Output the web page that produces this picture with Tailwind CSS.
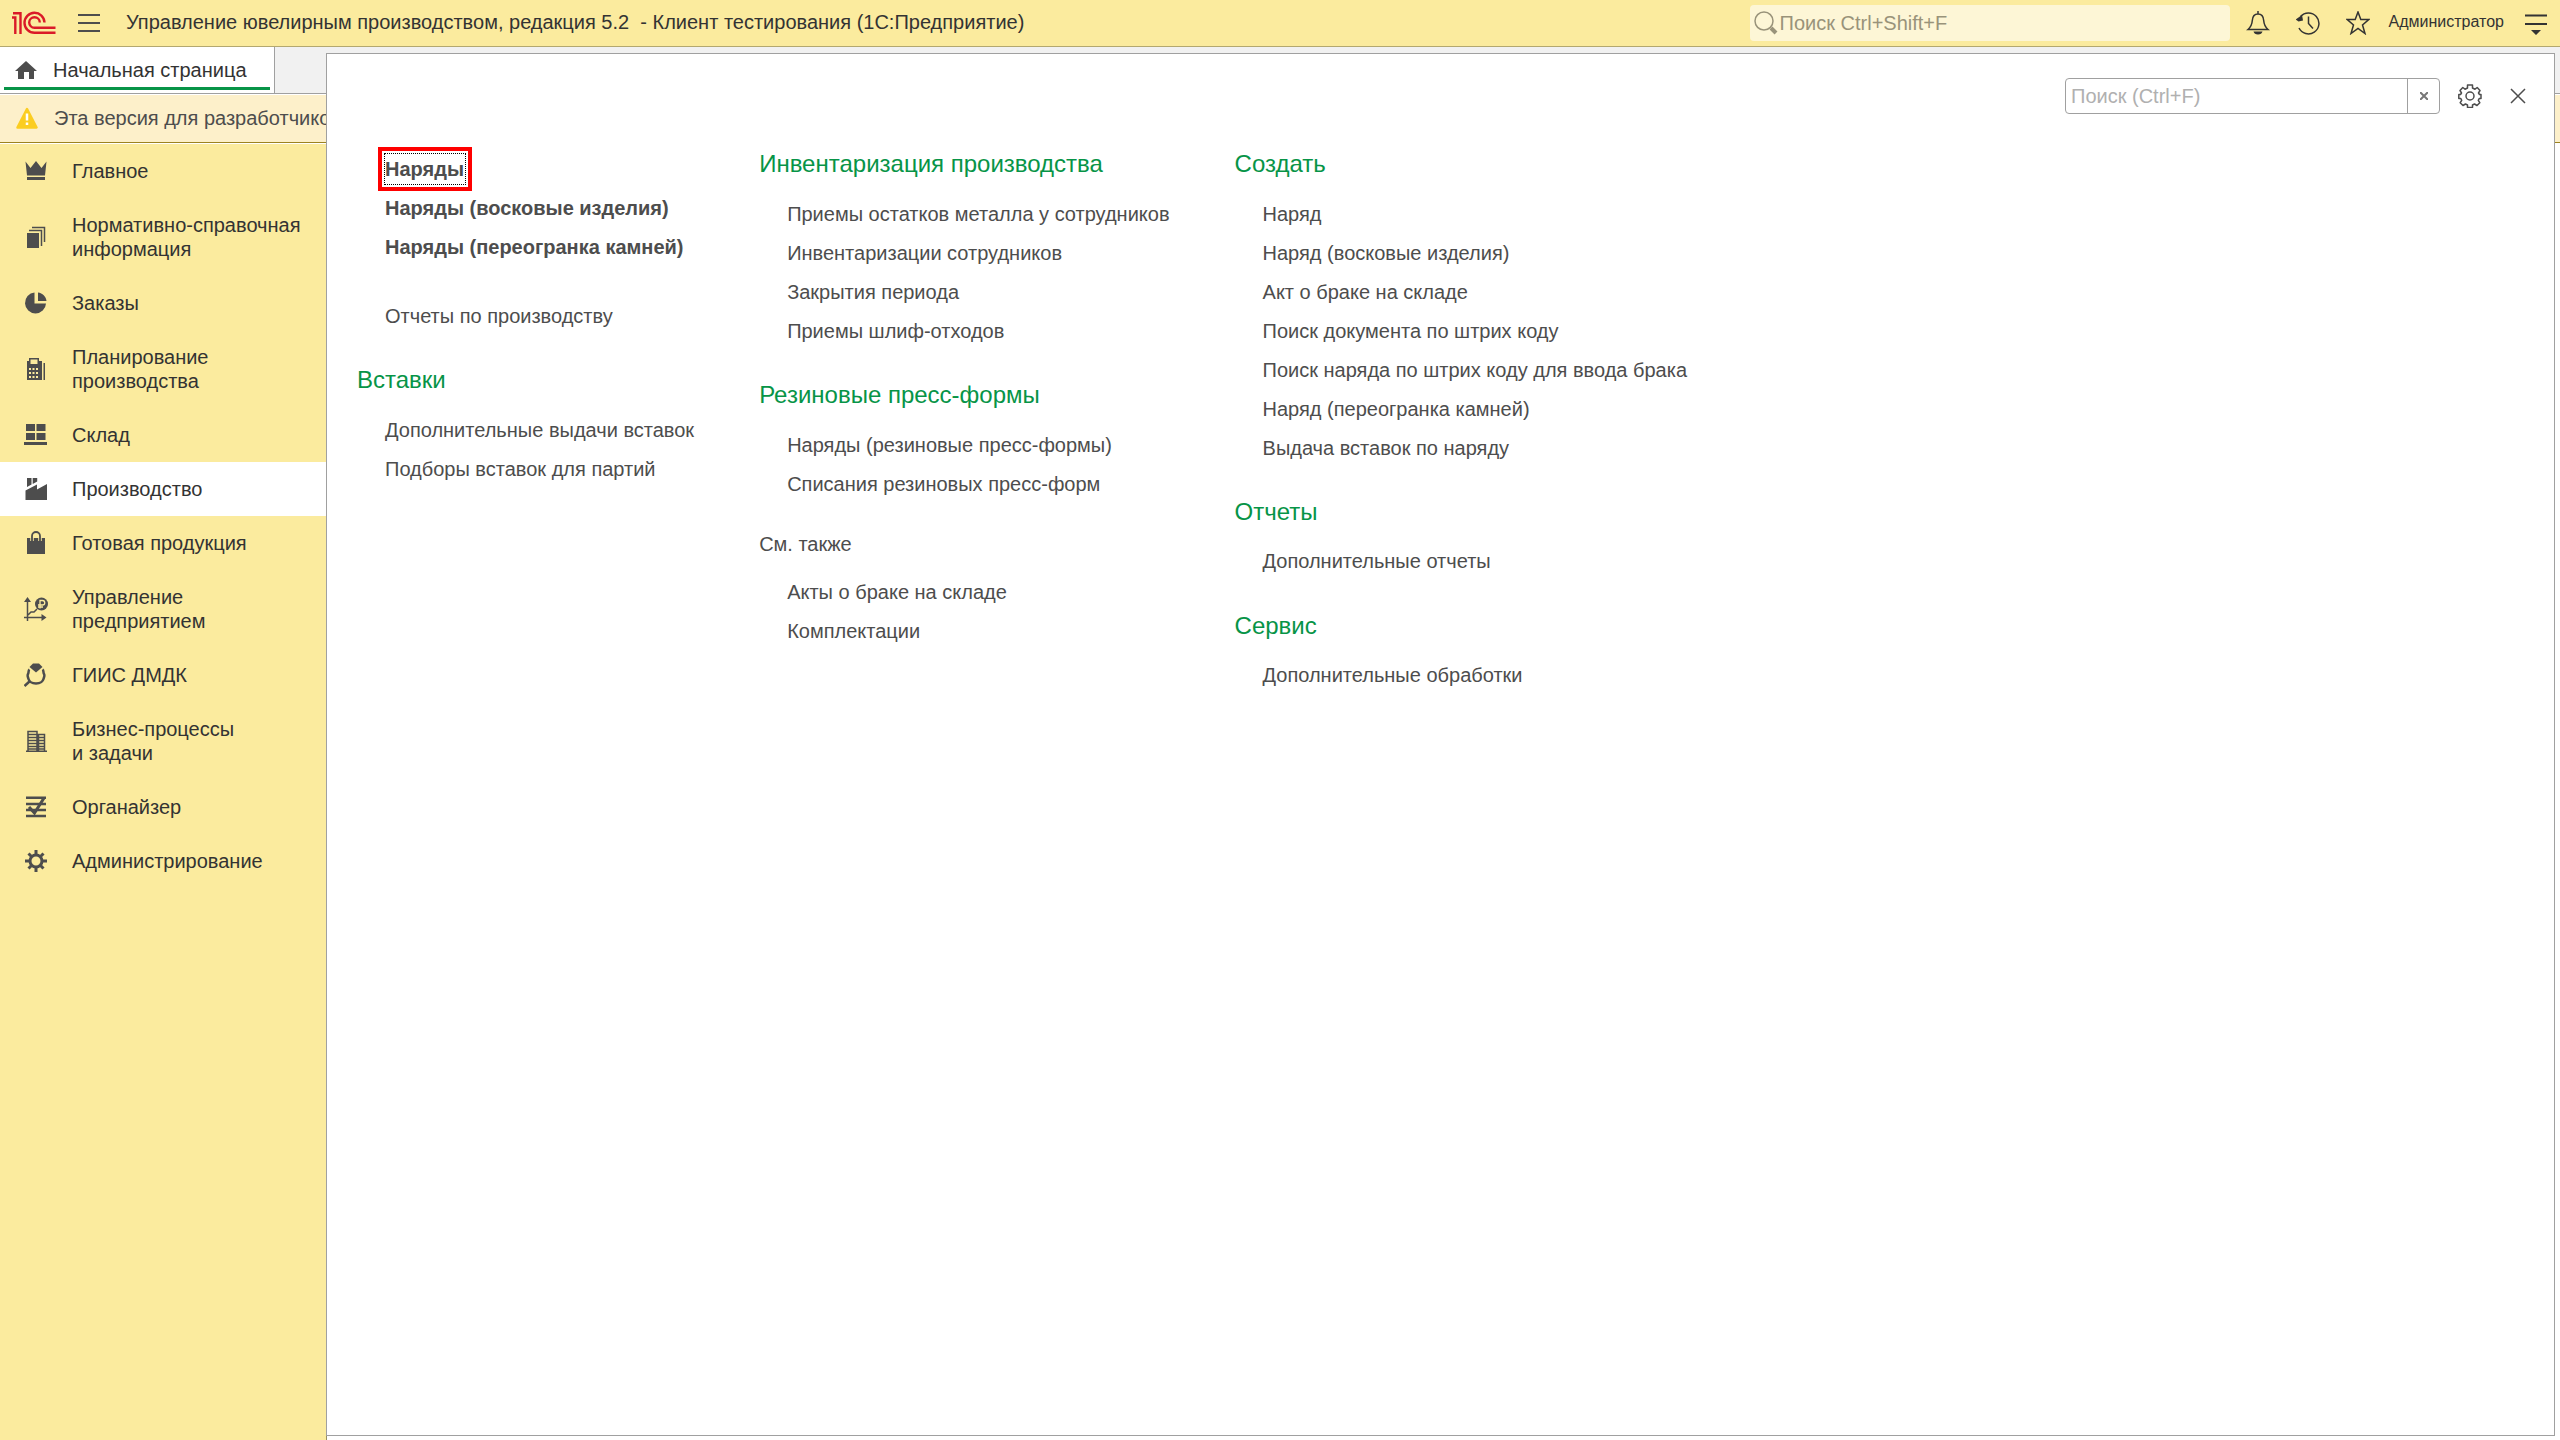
<!DOCTYPE html>
<html lang="ru">
<head>
<meta charset="utf-8">
<title>Управление ювелирным производством</title>
<script src="https://cdn.jsdelivr.net/npm/@tailwindcss/browser@4"></script>
</head>
<body class="relative flex h-screen min-h-[900px] flex-col overflow-hidden bg-white font-['Liberation_Sans',Arial,sans-serif] text-[20px] leading-6 text-[#4d4d4d]">

<header class="flex h-[47px] shrink-0 items-center border-b border-[#b3a870] bg-[#fbeb9e] px-3 text-[#333]">
  <svg class="h-6 w-11" viewBox="0 0 44 24" fill="none" stroke="#da1a28" stroke-width="2.400" aria-label="1С">
    <path d="M0 6.500h3.300V23M1 2.200h7.500V23"/>
    <path d="M32.500 11.500a10 10 0 1 0-10 10.300h21M27.800 11.500a5.300 5.300 0 1 0-5.300 5.300h21"/>
  </svg>
  <button class="ml-[22px] flex w-[22px] flex-col gap-[6px]" aria-label="Меню">
    <span class="h-[2px] w-full bg-[#4d4d4d]"></span><span class="h-[2px] w-full bg-[#4d4d4d]"></span><span class="h-[2px] w-full bg-[#4d4d4d]"></span>
  </button>
  <h1 class="ml-[26px] flex-1 pb-[2px] whitespace-pre">Управление ювелирным производством, редакция 5.2  - Клиент тестирования (1С:Предприятие)</h1>
  <label class="flex h-9 w-[480px] items-center rounded bg-[#fdf6d6] pl-1">
    <svg class="h-6 w-6" viewBox="0 0 24 24" fill="none" stroke="#99937a" stroke-width="1.500"><circle cx="10" cy="10" r="9"/><path d="M17 17l5 5" stroke-width="4"/></svg>
    <input class="ml-[2px] flex-1 outline-none placeholder:text-[#99937a]" placeholder="Поиск Ctrl+Shift+F" aria-label="Поиск">
  </label>
  <button class="ml-4 h-6 w-6" aria-label="Уведомления"><svg viewBox="0 0 24 24" fill="none" stroke="#333" stroke-width="1.500"><path d="M12 0v3M2 18.500c3.500-3 4-5 4.300-9C6.600 5 9 3 12 3s5.400 2 5.700 6.500c.3 4 .8 6 4.300 9z"/><path d="M7.500 20.500h9c-.5 2-2 3-4.500 3s-4-1-4.500-3z" fill="#333" stroke="none"/></svg></button>
  <button class="ml-[26px] h-6 w-6" aria-label="История"><svg viewBox="0 0 24 24" fill="none" stroke="#333" stroke-width="1.500"><path d="M4.500 5.500A10.500 10.500 0 1 1 3 17M12.500 5.500v7l4.500 5"/><path d="M-.5 8.500L6 4l1 5.500-4.500 1z" fill="#333" stroke="none"/></svg></button>
  <button class="ml-[26px] h-6 w-6" aria-label="Избранное"><svg viewBox="0 0 24 24" fill="none" stroke="#333" stroke-width="1.500"><path d="M12 1l2.800 7.500h8L16.500 14l2.500 8.500-7-5-7 5L7.500 14 1.200 8.500h8z"/></svg></button>
  <a href="#" class="ml-[19px] pb-[2px] text-base">Администратор</a>
  <button class="ml-5 h-6 w-6" aria-label="Сервис"><svg viewBox="0 0 24 24"><path d="M1 3.500h22v2H1zM1 12h22v2H1zM7 19h10l-5 5z" fill="#333"/></svg></button>
</header>

<nav class="flex h-[47px] shrink-0 border-b border-[#a0a0a0] bg-[#f1f1f1]">
  <a href="#" class="flex w-[275px] flex-col border-r border-[#a0a0a0] bg-white px-1 text-[#333]">
    <span class="flex flex-1 items-center gap-4 border-b-3 border-[#079447] pt-[5px] pl-[11px]">
      <svg class="h-5 w-[22px]" viewBox="0 0 22 20" fill="#4d4d4d"><path d="M11 1l11 10h-3v8h-5v-7H9v7H3v-8H0z"/></svg>Начальная страница</span>
    <span class="h-[3px]"></span>
  </a>
</nav>

<div class="mt-px flex h-12 shrink-0 items-center gap-4 border-b border-[#9c8320] bg-[#fdf0ca] pb-[2px] pl-4">
  <svg class="h-[22px] w-[22px]" viewBox="0 0 22 22"><path d="M11 2l9.500 18.500h-19z" fill="#fbcd22" stroke="#fbcd22" stroke-width="2.500" stroke-linejoin="round"/><path d="M11 6.500v7M11 15.500v2.500" stroke="#fff" stroke-width="2.500"/></svg>
  <p>Эта версия для разработчиков</p>
</div>

<aside class="mt-px w-[327px] flex-1 border-r border-[#989060] bg-[#fbeb9e] text-[#333]">
  <ul>
    <li><a href="#" class="flex items-center gap-6 py-[15px] pl-6"><svg class="h-6 w-6" viewBox="0 0 24 24" fill="#4d4d4d"><path d="M1.500 2.500L6.500 9 12 2l5.500 7 5-6.500L21 16.500H3zM3 18h18v3H3z"/></svg>Главное</a></li>
    <li><a href="#" class="flex items-center gap-6 py-[15px] pl-6"><svg class="h-6 w-6" viewBox="0 0 24 24" fill="#4d4d4d"><path d="M3 8h12v15H3z"/><path d="M5 5.500h12.500V21M8 2.500h12.500V17" fill="none" stroke="#4d4d4d" stroke-width="1.500"/></svg>Нормативно-справочная<br>информация</a></li>
    <li><a href="#" class="flex items-center gap-6 py-[15px] pl-6"><svg class="h-6 w-6" viewBox="0 0 24 24" fill="#4d4d4d"><path d="M10.500 1.500v11H22A10.500 10.500 0 1 1 10.500 1.500zM14 1.500c4.500.5 8 4 8.500 8.500H14z"/></svg>Заказы</a></li>
    <li><a href="#" class="flex items-center gap-6 py-[15px] pl-6"><svg class="h-6 w-6" viewBox="0 0 24 24" fill="#4d4d4d"><path fill-rule="evenodd" d="M5 1h10v3h3v19H3V4h2zM6.500 2.500V7h7V2.500zM5 11v2h2v-2zm3.500 0v2h2v-2zm3.500 0v2h2v-2zM5 15v2h2v-2zm3.500 0v2h2v-2zm3.500 0v2h2v-2zM5 19v2h2v-2zm3.500 0v2h2v-2zm3.500 0v2h2v-2zM19.500 6H21v17h-1.500z"/></svg>Планирование<br>производства</a></li>
    <li><a href="#" class="flex items-center gap-6 py-[15px] pl-6"><svg class="h-6 w-6" viewBox="0 0 24 24" fill="#4d4d4d"><path d="M2 1h9v7H2zM12.500 1h9v7h-9zM2 10h9v7H2zM12.500 10h9v7h-9zM0 19h23v3H0z"/></svg>Склад</a></li>
    <li><a href="#" class="flex items-center gap-6 bg-white py-[15px] pl-6" aria-current="page"><svg class="h-6 w-6" viewBox="0 0 24 24" fill="#4d4d4d"><path d="M3 1h4.500v6.500L3 10zM8.700 1h4.500v3.500L8.700 7zM1.500 13.500L13 7.500v5l10-5.500v16H1.500z"/></svg>Производство</a></li>
    <li><a href="#" class="flex items-center gap-6 py-[15px] pl-6"><svg class="h-6 w-6" viewBox="0 0 24 24" fill="#4d4d4d"><path d="M3 7h18v16H3z"/><path d="M8 10V5a4 4 0 0 1 8 0v5" fill="none" stroke="#fbeb9e" stroke-width="3.500"/><path d="M8 10V5a4 4 0 0 1 8 0v5" fill="none" stroke="#4d4d4d" stroke-width="1.800"/></svg>Готовая продукция</a></li>
    <li><a href="#" class="flex items-center gap-6 py-[15px] pl-6"><svg class="h-6 w-6" viewBox="0 0 24 24" fill="#4d4d4d"><path d="M0 5l3.500-5L7 5zM17.500 17l5 3.500-5 3.500z"/><path d="M3.500 3v21M0 20.500h20M4 18l3-3h3l3-3" fill="none" stroke="#4d4d4d" stroke-width="1.500"/><circle cx="17.500" cy="7" r="6.500"/><path d="M16 11.500V3.500h2.500a2 2 0 0 1 0 4.500H14M14 10h5" fill="none" stroke="#fbeb9e" stroke-width="1.300"/></svg>Управление<br>предприятием</a></li>
    <li><a href="#" class="flex items-center gap-6 py-[15px] pl-6"><svg class="h-6 w-6" viewBox="0 0 24 24" fill="#4d4d4d"><path d="M9 .5h6L18.500 4 12 9.500 5.500 4z"/><path d="M5.500 6.500c-1.500 1-.5 3-1.500 4.500s0 3 .5 5 3 4.500 7.500 4.500 7-2.500 7.500-4.500 1.500-3.500.5-5 0-3.500-1.500-4.500M6 18l-5.500 5" fill="none" stroke="#4d4d4d" stroke-width="2.500"/></svg>ГИИС ДМДК</a></li>
    <li><a href="#" class="flex items-center gap-6 py-[15px] pl-6"><svg class="h-6 w-6" viewBox="0 0 24 24" fill="none" stroke="#4d4d4d" stroke-width="1.500"><path d="M2 22.200h21M4 22V2.500h9V22M14.500 22V5.500h6V22M4 5.500h9M4 8.500h9M4 11.500h9M4 14.500h9M4 17.500h9M4 20h9M14 8.500h7M14 11.500h7M14 14.500h7M14 17.500h7M14 20h7"/></svg>Бизнес-процессы<br>и задачи</a></li>
    <li><a href="#" class="flex items-center gap-6 py-[15px] pl-6"><svg class="h-6 w-6" viewBox="0 0 24 24" fill="none" stroke="#4d4d4d" stroke-width="2.500"><path d="M2 2.800h20M2 9h20M2 15h20M2 21h20"/><path d="M5 12l5.500 6L20 3" stroke-width="3"/></svg>Органайзер</a></li>
    <li><a href="#" class="flex items-center gap-6 py-[15px] pl-6"><svg class="h-6 w-6" viewBox="0 0 24 24" fill="none" stroke="#4d4d4d" stroke-width="3"><circle cx="12" cy="12" r="6"/><path d="M12 1v5M12 18v5M1 12h5M18 12h5M4.500 4.500l3 3M16.500 16.500l3 3M4.500 19.500l3-3M16.500 7.500l3-3"/></svg>Администрирование</a></li>
  </ul>
</aside>

<main class="absolute top-[53px] right-[5px] bottom-1 left-[326px] border border-[#a0a0a0] bg-white">
  <div class="flex items-center justify-end pt-6 pr-6">
    <form class="flex h-9 w-[375px] overflow-hidden rounded border border-[#a0a0a0]">
      <input class="min-w-0 flex-1 px-[5px] outline-none placeholder:text-[#b0b0b0]" placeholder="Поиск (Ctrl+F)" aria-label="Поиск в разделе">
      <button type="reset" class="flex w-8 items-center justify-center border-l border-[#a0a0a0]" aria-label="Очистить"><svg class="h-2 w-2" viewBox="0 0 8 8" stroke="#777" stroke-width="2"><path d="M0 0l8 8M8 0L0 8"/></svg></button>
    </form>
    <button class="ml-[18px] h-6 w-6" aria-label="Настройки"><svg viewBox="0 0 24 24" fill="none" stroke="#4d4d4d" stroke-width="1.500" stroke-linejoin="round"><path d="M9.500 1h5v3l2.500 1.200 2.200-1.700 2.800 3-1.500 2.500 1 1.500h1.500v4h-1.800l-.9 1.800 1.500 2.400-2.800 2.800-2.500-1.500-2 1v2.500h-5v-2.500l-2-1L5 21.500l-2.800-2.800 1.500-2.400-.9-1.800H.8v-4h1.700L3.500 9 2 6.500l2.800-3L7 5.200 9.500 4z"/><circle cx="12" cy="12" r="4"/></svg></button>
    <button class="ml-6 h-6 w-6" aria-label="Закрыть"><svg viewBox="0 0 24 24" stroke="#4d4d4d" stroke-width="1.500"><path d="M5 5l14 14M19 5L5 19"/></svg></button>
  </div>

  <div class="flex items-start gap-[65px] pt-[30px] pl-[30px] leading-[39px]">
    <section>
      <ul class="pt-[6px] pl-7 font-bold">
        <li><a href="#" class="relative">Наряды<span class="absolute -inset-y-[11px] -right-2 -left-[7px] border-4 border-[#f00] p-[2px]"><span class="block h-full border border-dotted border-black"></span></span></a></li>
        <li><a href="#">Наряды (восковые изделия)</a></li>
        <li><a href="#">Наряды (переогранка камней)</a></li>
      </ul>
      <ul class="pt-[30px] pl-7"><li><a href="#">Отчеты по производству</a></li></ul>
      <h2 class="pt-6 pb-3 text-2xl leading-[39px] text-[#079447]">Вставки</h2>
      <ul class="pl-7">
        <li><a href="#">Дополнительные выдачи вставок</a></li>
        <li><a href="#">Подборы вставок для партий</a></li>
      </ul>
    </section>
    <section>
      <h2 class="pb-3 text-2xl leading-[39px] text-[#079447]">Инвентаризация производства</h2>
      <ul class="pl-7">
        <li><a href="#">Приемы остатков металла у сотрудников</a></li>
        <li><a href="#">Инвентаризации сотрудников</a></li>
        <li><a href="#">Закрытия периода</a></li>
        <li><a href="#">Приемы шлиф-отходов</a></li>
      </ul>
      <h2 class="pt-6 pb-3 text-2xl leading-[39px] text-[#079447]">Резиновые пресс-формы</h2>
      <ul class="pl-7">
        <li><a href="#">Наряды (резиновые пресс-формы)</a></li>
        <li><a href="#">Списания резиновых пресс-форм</a></li>
      </ul>
      <h2 class="pt-[21px] pb-[9px]">См. также</h2>
      <ul class="pl-7">
        <li><a href="#">Акты о браке на складе</a></li>
        <li><a href="#">Комплектации</a></li>
      </ul>
    </section>
    <section>
      <h2 class="pb-3 text-2xl leading-[39px] text-[#079447]">Создать</h2>
      <ul class="pl-7">
        <li><a href="#">Наряд</a></li>
        <li><a href="#">Наряд (восковые изделия)</a></li>
        <li><a href="#">Акт о браке на складе</a></li>
        <li><a href="#">Поиск документа по штрих коду</a></li>
        <li><a href="#">Поиск наряда по штрих коду для ввода брака</a></li>
        <li><a href="#">Наряд (переогранка камней)</a></li>
        <li><a href="#">Выдача вставок по наряду</a></li>
      </ul>
      <h2 class="pt-6 pb-[11px] text-2xl leading-[39px] text-[#079447]">Отчеты</h2>
      <ul class="pl-7"><li><a href="#">Дополнительные отчеты</a></li></ul>
      <h2 class="pt-[25px] pb-[11px] text-2xl leading-[39px] text-[#079447]">Сервис</h2>
      <ul class="pl-7"><li><a href="#">Дополнительные обработки</a></li></ul>
    </section>
  </div>
</main>
</body>
</html>
